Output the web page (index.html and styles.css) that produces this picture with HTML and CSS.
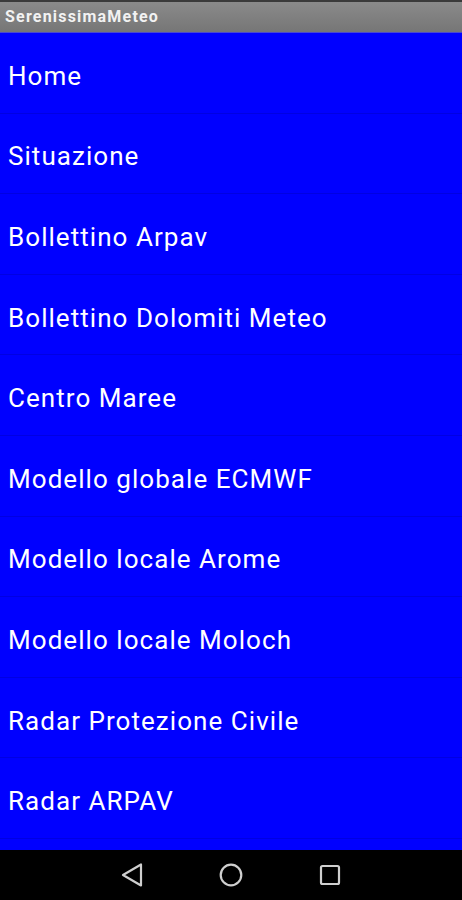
FILE: index.html
```html
<!DOCTYPE html>
<html lang="it">
<head>
<meta charset="utf-8">
<title>SerenissimaMeteo</title>
<link rel="stylesheet" href="styles.css">
</head>
<body>
<div class="screen">
  <header class="titlebar"><span class="title">SerenissimaMeteo</span></header>
  <ul class="menu">
    <li class="item">Home</li>
    <li class="item">Situazione</li>
    <li class="item">Bollettino Arpav</li>
    <li class="item">Bollettino Dolomiti Meteo</li>
    <li class="item">Centro Maree</li>
    <li class="item">Modello globale ECMWF</li>
    <li class="item">Modello locale Arome</li>
    <li class="item">Modello locale Moloch</li>
    <li class="item">Radar Protezione Civile</li>
    <li class="item">Radar ARPAV</li>
  </ul>
  <nav class="navbar">
    <svg class="navicon" width="24" height="26" viewBox="0 0 24 26"><path d="M3 13 L21 2.5 V23.5 Z" fill="none" stroke="#cfcfcf" stroke-width="2.2" stroke-linejoin="round"/></svg>
    <svg class="navicon" width="26" height="26" viewBox="0 0 26 26"><circle cx="13" cy="13" r="10.3" fill="none" stroke="#cfcfcf" stroke-width="2.2"/></svg>
    <svg class="navicon" width="24" height="24" viewBox="0 0 24 24"><rect x="3" y="3" width="18" height="18" rx="1.5" fill="none" stroke="#cfcfcf" stroke-width="2.2"/></svg>
  </nav>
</div>
</body>
</html>
```
FILE: styles.css
```css
html, body {
  margin: 0;
  padding: 0;
  background: #0000ff;
}
.screen {
  width: 462px;
  height: 900px;
  display: flex;
  flex-direction: column;
  overflow: hidden;
  font-family: Roboto, "Noto Sans", sans-serif;
}
.titlebar {
  height: 33px;
  box-sizing: border-box;
  flex: none;
  display: flex;
  align-items: center;
  padding: 0 0 2px 5px;
  border-top: 2px solid #3a3a3a;
  border-bottom: 1px solid #4a4ad0;
  background: linear-gradient(#8a8a8a, #767676);
}
.title {
  color: #f2f2f2;
  font-weight: bold;
  font-size: 16px;
  letter-spacing: 1.2px;
}
.menu {
  list-style: none;
  margin: 0;
  padding: 0;
  flex: 1;
  background: #0000ff;
  overflow: hidden;
}
.item {
  height: 80.6px;
  box-sizing: border-box;
  display: flex;
  align-items: center;
  padding: 6px 0 0 8px;
  color: #ffffff;
  font-size: 26px;
  letter-spacing: 1.05px;
  border-bottom: 1px solid #0000e2;
}
.navbar {
  height: 50px;
  flex: none;
  background: #000000;
  display: flex;
  align-items: center;
  justify-content: center;
  gap: 74px;
}
.navicon {
  display: block;
}
```
